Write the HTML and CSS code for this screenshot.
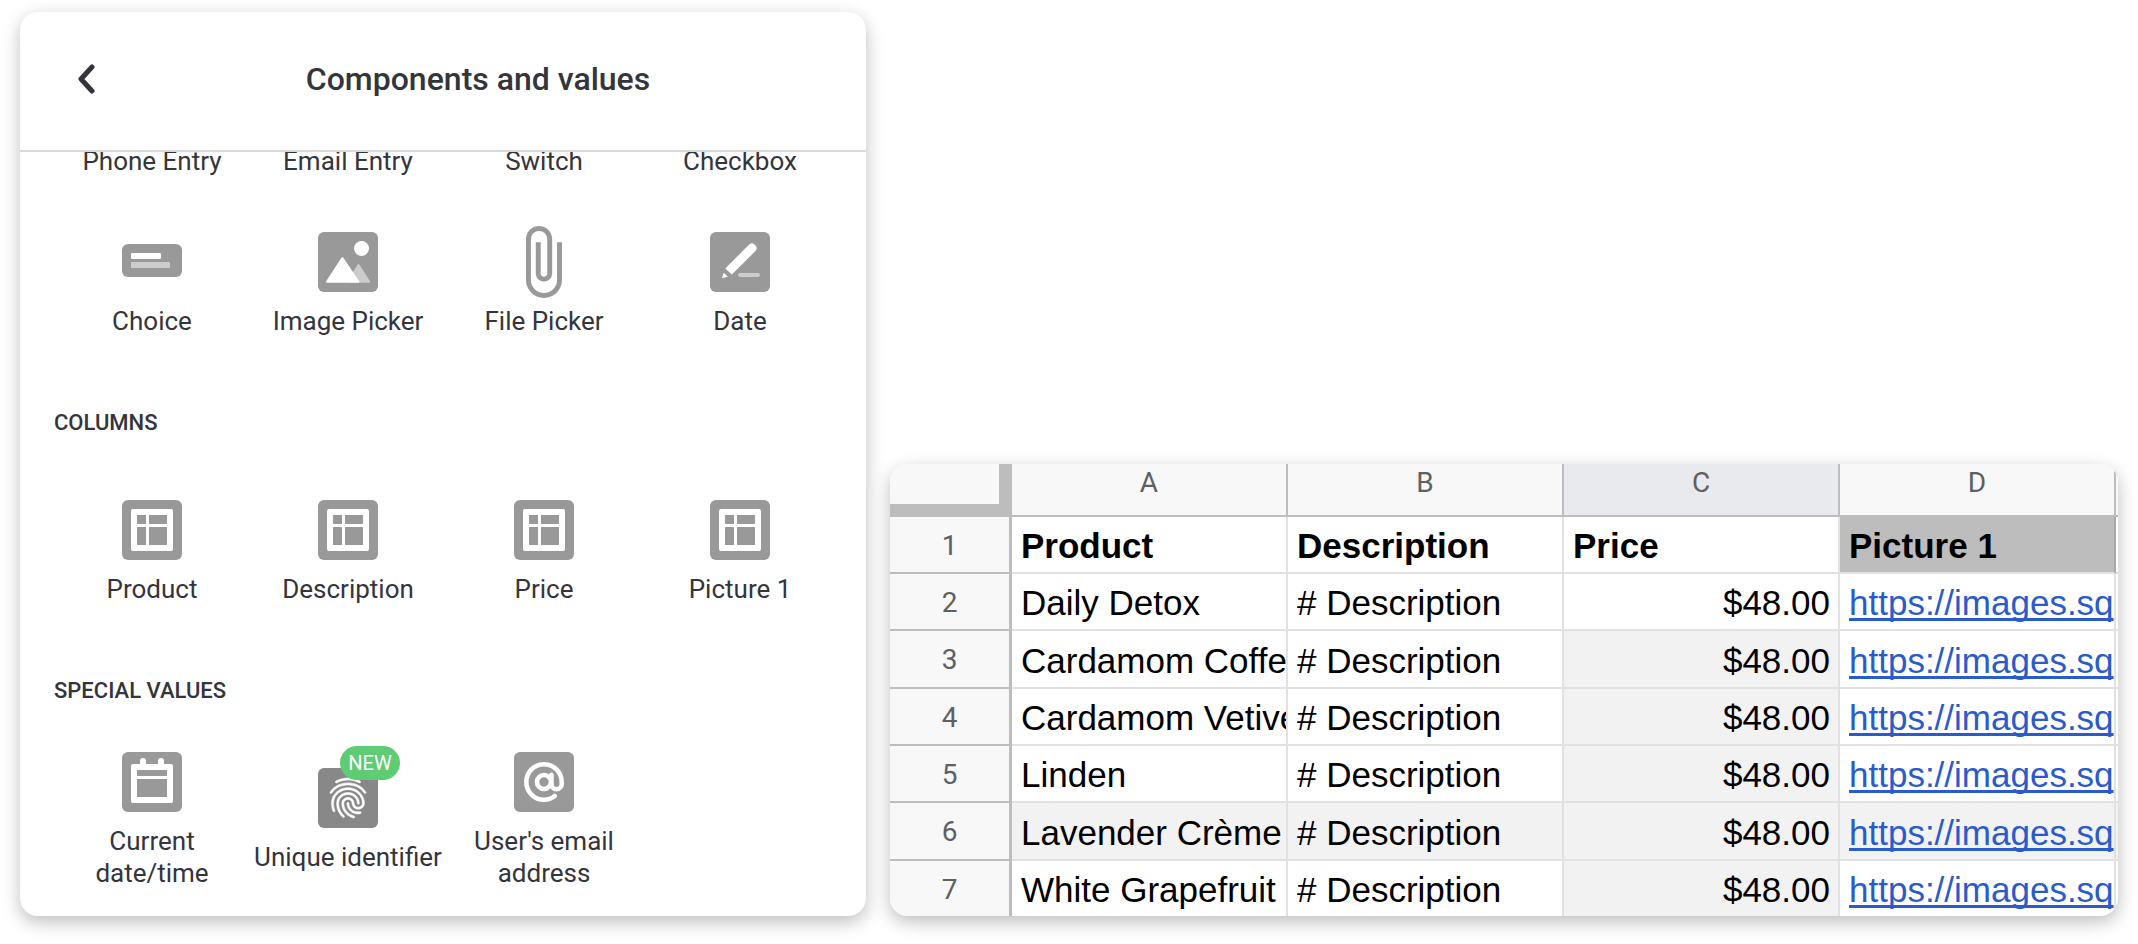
FILE: index.html
```html
<!DOCTYPE html>
<html lang="en">
<head>
    <meta charset="UTF-8">
    <meta name="viewport" content="width=device-width, initial-scale=1.0">
    <title>Components and values</title>
    <link rel="stylesheet" href="styles.css">
</head>
<body>
    <!-- shared column icon -->
    <svg class="sprite" aria-hidden="true">
        <symbol id="icon-column" viewBox="0 0 60 60">
            <rect width="60" height="60" rx="6" fill="#999"/>
            <rect x="9" y="9" width="42" height="42" rx="2" fill="#fff"/>
            <path d="M15 15h9v9h-9zM27 15h18v9h-18zM15 27h9v18h-9zM27 27h18v18h-18z" fill="#999"/>
        </symbol>
    </svg>

    <main class="page">
        <section class="card picker">
            <header class="picker-header">
                <button class="back" type="button" aria-label="Back">
                    <svg width="18" height="30" viewBox="0 0 18 30"><path d="M15 3L4 15l11 12" fill="none" stroke="#34343c" stroke-width="5" stroke-linecap="round" stroke-linejoin="round"/></svg>
                </button>
                <h1>Components and values</h1>
            </header>

            <div class="picker-body">
                <div class="scroll-content">
                    <div class="items">
                        <button class="item" type="button">Phone Entry</button>
                        <button class="item" type="button">Email Entry</button>
                        <button class="item" type="button">Switch</button>
                        <button class="item" type="button">Checkbox</button>
                    </div>
                    <div class="items fields">
                        <button class="item" type="button">
                            <svg class="icon" viewBox="0 0 60 60">
                                <rect y="12" width="60" height="33" rx="6" fill="#999"/>
                                <rect x="9" y="21" width="30" height="6" rx="1" fill="#fff"/>
                                <rect x="9" y="30" width="39" height="6" rx="1" fill="#ccc"/>
                            </svg>
                            Choice
                        </button>
                        <button class="item" type="button">
                            <svg class="icon" viewBox="0 0 60 60">
                                <rect width="60" height="60" rx="6" fill="#999"/>
                                <circle cx="43.5" cy="16.5" r="7.5" fill="#fff"/>
                                <path d="M40.5 33L51.2 49.7H30z" fill="#ccc" stroke="#ccc" stroke-width="2" stroke-linejoin="round"/>
                                <path d="M24.4 26L9 49.7h31.4z" fill="#fff" stroke="#fff" stroke-width="2" stroke-linejoin="round"/>
                            </svg>
                            Image Picker
                        </button>
                        <button class="item" type="button">
                            <svg class="icon" viewBox="0 0 60 60">
                                <path transform="translate(-10.9 -9.27) scale(3.27)" fill="#999" d="M16.5 6v11.5c0 2.21-1.79 4-4 4s-4-1.79-4-4V5a2.5 2.5 0 0 1 5 0v10.5c0 .55-.45 1-1 1s-1-.45-1-1V6H10v9.5a2.5 2.5 0 0 0 5 0V5c0-2.21-1.79-4-4-4S7 2.79 7 5v12.5c0 3.04 2.46 5.5 5.5 5.5s5.5-2.46 5.5-5.5V6h-1.5z"/>
                            </svg>
                            File Picker
                        </button>
                        <button class="item" type="button">
                            <svg class="icon" viewBox="0 0 60 60">
                                <rect width="60" height="60" rx="6" fill="#999"/>
                                <path d="M15.3 36.6L38.7 12.9a4.6 4.6 0 0 1 6.6 6.4L21.8 42.4zM13.7 40.8l4.2 3.9L12 46z" fill="#fff"/>
                                <rect x="28" y="41" width="22" height="4" rx="2" fill="#ccc"/>
                            </svg>
                            Date
                        </button>
                    </div>

                    <h2>COLUMNS</h2>
                    <div class="items columns">
                        <button class="item" type="button"><svg class="icon"><use href="#icon-column"/></svg>Product</button>
                        <button class="item" type="button"><svg class="icon"><use href="#icon-column"/></svg>Description</button>
                        <button class="item" type="button"><svg class="icon"><use href="#icon-column"/></svg>Price</button>
                        <button class="item" type="button"><svg class="icon"><use href="#icon-column"/></svg>Picture 1</button>
                    </div>

                    <h2>SPECIAL VALUES</h2>
                    <div class="items special">
                        <button class="item" type="button">
                            <svg class="icon" viewBox="0 0 60 60">
                                <rect width="60" height="60" rx="6" fill="#999"/>
                                <path d="M18 12V9a3 3 0 0 1 6 0v3h12V9a3 3 0 0 1 6 0v3h7a2 2 0 0 1 2 2v35a2 2 0 0 1-2 2H11a2 2 0 0 1-2-2V14a2 2 0 0 1 2-2z" fill="#fff"/>
                                <path d="M15 18h30v6H15zM15 27h30v18H15z" fill="#999"/>
                            </svg>
                            Current date/time
                        </button>
                        <button class="item has-badge" type="button">
                            <span class="icon-wrap">
                                <svg class="icon" viewBox="0 0 60 60">
                                    <rect width="60" height="60" rx="6" fill="#888"/>
                                    <path transform="translate(6 6) scale(2)" fill="#fff" stroke="#fff" stroke-width=".3" d="M17.81 4.47c-.08 0-.16-.02-.23-.06C15.66 3.42 14 3 12.01 3c-1.98 0-3.86.47-5.57 1.41-.24.13-.54.04-.68-.2-.13-.24-.04-.55.2-.68C7.82 2.52 9.86 2 12.01 2c2.13 0 3.99.47 6.03 1.52.25.13.34.43.21.67-.09.18-.26.28-.44.28zM3.5 9.72c-.1 0-.2-.03-.29-.09-.23-.16-.28-.47-.12-.7.99-1.4 2.25-2.5 3.75-3.27C9.98 4.04 14 4.03 17.15 5.65c1.5.77 2.76 1.86 3.75 3.25.16.22.11.54-.12.7-.23.16-.54.11-.7-.12-.9-1.26-2.04-2.25-3.39-2.94-2.87-1.47-6.54-1.47-9.4.01-1.36.7-2.5 1.7-3.4 2.96-.08.14-.23.21-.39.21zm6.25 12.07c-.13 0-.26-.05-.35-.15-.87-.87-1.34-1.43-2.01-2.64-.69-1.23-1.05-2.73-1.05-4.34 0-2.97 2.54-5.39 5.66-5.39s5.66 2.42 5.66 5.39c0 .28-.22.5-.5.5s-.5-.22-.5-.5c0-2.42-2.09-4.39-4.66-4.39-2.57 0-4.66 1.97-4.66 4.39 0 1.44.32 2.77.93 3.85.64 1.15 1.08 1.64 1.85 2.42.19.2.19.51 0 .71-.11.1-.24.15-.37.15zm7.17-1.85c-1.19 0-2.24-.3-3.1-.89-1.49-1.01-2.38-2.65-2.38-4.39 0-.28.22-.5.5-.5s.5.22.5.5c0 1.41.72 2.74 1.94 3.56.71.48 1.54.71 2.54.71.24 0 .64-.03 1.04-.1.27-.05.53.13.58.41.05.27-.13.53-.41.58-.57.11-1.07.12-1.21.12zM14.91 22c-.04 0-.09-.01-.13-.02-1.59-.44-2.63-1.03-3.72-2.1-1.4-1.39-2.17-3.24-2.17-5.22 0-1.62 1.38-2.94 3.08-2.94 1.7 0 3.08 1.32 3.08 2.94 0 1.07.93 1.94 2.08 1.94s2.08-.87 2.08-1.94c0-3.77-3.25-6.83-7.25-6.83-2.84 0-5.44 1.58-6.61 4.03-.39.81-.59 1.76-.59 2.8 0 .78.07 2.01.67 3.61.1.26-.03.55-.29.64-.26.1-.55-.04-.64-.29-.49-1.31-.73-2.61-.73-3.96 0-1.2.23-2.29.68-3.24 1.33-2.79 4.28-4.6 7.51-4.6 4.55 0 8.25 3.51 8.25 7.83 0 1.62-1.38 2.94-3.08 2.94s-3.08-1.32-3.08-2.94c0-1.07-.93-1.94-2.08-1.94s-2.08.87-2.08 1.94c0 1.71.66 3.31 1.87 4.51.95.94 1.86 1.46 3.27 1.85.27.07.42.35.35.61-.05.23-.26.38-.47.38z"/>
                                </svg>
                                <span class="badge">NEW</span>
                            </span>
                            Unique identifier
                        </button>
                        <button class="item" type="button">
                            <svg class="icon" viewBox="0 0 60 60">
                                <rect width="60" height="60" rx="6" fill="#999"/>
                                <g fill="none" stroke="#fff" stroke-width="4.6" stroke-linecap="round">
                                    <circle cx="30" cy="30" r="7"/>
                                    <path d="M37.4 22.8V32a5.1 5.1 0 0 0 10.3 0v-2A17.7 17.7 0 1 0 30 47.7c4 0 7.6-1.2 10.7-3.7"/>
                                </g>
                            </svg>
                            User's email address
                        </button>
                    </div>
                </div>
            </div>
        </section>

        <section class="card sheet">
            <table>
                <colgroup>
                    <col class="col-number">
                    <col>
                    <col>
                    <col>
                    <col>
                    <col class="col-edge">
                </colgroup>
                <thead>
                    <tr>
                        <td class="corner"></td>
                        <th scope="col">A</th>
                        <th scope="col">B</th>
                        <th scope="col" class="active">C</th>
                        <th scope="col">D</th>
                        <td class="edge"></td>
                    </tr>
                </thead>
                <tbody>
                    <tr class="titles">
                        <th scope="row">1</th>
                        <td>Product</td>
                        <td>Description</td>
                        <td>Price</td>
                        <td class="selected">Picture 1</td>
                        <td class="edge"></td>
                    </tr>
                    <tr>
                        <th scope="row">2</th>
                        <td>Daily Detox</td>
                        <td># Description</td>
                        <td class="price">$48.00</td>
                        <td><a href="#">https://images.sq</a></td>
                        <td class="edge"></td>
                    </tr>
                    <tr>
                        <th scope="row">3</th>
                        <td>Cardamom Coffee</td>
                        <td># Description</td>
                        <td class="price shaded">$48.00</td>
                        <td><a href="#">https://images.sq</a></td>
                        <td class="edge"></td>
                    </tr>
                    <tr>
                        <th scope="row">4</th>
                        <td>Cardamom Vetiver</td>
                        <td># Description</td>
                        <td class="price shaded">$48.00</td>
                        <td><a href="#">https://images.sq</a></td>
                        <td class="edge"></td>
                    </tr>
                    <tr>
                        <th scope="row">5</th>
                        <td>Linden</td>
                        <td># Description</td>
                        <td class="price shaded">$48.00</td>
                        <td><a href="#">https://images.sq</a></td>
                        <td class="edge"></td>
                    </tr>
                    <tr class="shaded-row">
                        <th scope="row">6</th>
                        <td>Lavender Crème</td>
                        <td># Description</td>
                        <td class="price">$48.00</td>
                        <td><a href="#">https://images.sq</a></td>
                        <td class="edge"></td>
                    </tr>
                    <tr>
                        <th scope="row">7</th>
                        <td>White Grapefruit</td>
                        <td># Description</td>
                        <td class="price shaded">$48.00</td>
                        <td><a href="#">https://images.sq</a></td>
                        <td class="edge"></td>
                    </tr>
                </tbody>
            </table>
        </section>
    </main>
</body>
</html>
```
FILE: styles.css
```css
* {
    box-sizing: border-box;
}

body {
    margin: 0;
    background-color: #fff;
    font-family: Roboto, sans-serif;
    color: #34343c;
}

.sprite {
    display: none;
}

.page {
    display: grid;
    grid-template-columns: 846fr 1228fr;
    gap: 24px;
    align-items: end;
    padding: 12px 20px 28px;
}

.card {
    background-color: #fff;
    border-radius: 18px;
    box-shadow: 0 6px 18px rgba(0, 0, 0, 0.26);
    overflow: hidden;
    min-width: 0;
}

/* Component picker */

.picker-header {
    display: flex;
    align-items: center;
    padding: 48px 34px 52px 54px;
    border-bottom: 2px solid #d9d9d9;
}

.back {
    display: flex;
    width: 50px;
    padding: 0 3px;
    border: none;
    background: none;
    cursor: pointer;
}

h1 {
    flex: 1;
    margin: 0;
    font-size: 32px;
    line-height: 38px;
    font-weight: 500;
    text-align: center;
}

.picker-body {
    overflow: hidden;
}

/* list is scrolled, so its first row is cut by the header */
.scroll-content {
    margin-top: -7px;
    padding: 0 28px 27px 34px;
}

.items {
    display: grid;
    grid-template-columns: repeat(4, 1fr);
    align-items: start;
}

.fields {
    margin-top: 55px;
}

.columns {
    margin-top: 64px;
}

.special {
    margin-top: 48px;
}

.item {
    display: flex;
    flex-direction: column;
    align-items: center;
    gap: 13px;
    padding: 0 2px;
    border: none;
    background: none;
    font: inherit;
    font-size: 26px;
    line-height: 32px;
    color: inherit;
    cursor: pointer;
}

.special .item:not(.has-badge) {
    padding: 0 24px;
}

.has-badge {
    padding-top: 16px;
}

.icon {
    display: block;
    width: 60px;
    height: 60px;
    overflow: visible;
}

.icon-wrap {
    position: relative;
}

.badge {
    position: absolute;
    top: -22px;
    left: 22px;
    width: 60px;
    border-radius: 17px;
    background-color: #5ecb75;
    color: #fff;
    font-size: 20px;
    line-height: 34px;
    text-align: center;
}

h2 {
    margin: 73px 0 0;
    font-size: 22px;
    line-height: 26px;
    font-weight: 500;
}

/* Spreadsheet */

table {
    width: 100%;
    table-layout: fixed;
    border-collapse: separate;
    border-spacing: 0;
}

.col-number {
    width: 122px;
}

.col-edge {
    width: 2px;
}

th {
    padding: 0;
    background-color: #f8f8f8;
    border-right: 2px solid #bdbdbd;
    border-bottom: 2px solid #bdbdbd;
    color: #5f6063;
    font-size: 28px;
    line-height: 32px;
    font-weight: 400;
}

thead th {
    height: 53px;
    padding-bottom: 14px;
}

tbody th {
    padding-top: 2px;
    border-right-width: 3px;
}

td {
    height: 57px;
    padding: 3px 8px 0 9px;
    border-right: 2px solid #e1e1e4;
    border-bottom: 2px solid #e1e1e4;
    color: #000;
    font-family: "Liberation Sans", Arial, sans-serif;
    font-size: 35px;
    line-height: 42px;
    white-space: nowrap;
    overflow: hidden;
}

tr:nth-child(3n) td {
    height: 58px;
}

tbody tr:last-child td {
    height: 55px;
}

tbody tr:last-child > * {
    border-bottom: none;
}

thead .corner {
    height: 53px;
    background-color: #f8f8f8;
    border-right: 13px solid #bdbdbd;
    border-bottom: 13px solid #bdbdbd;
}

.active {
    background-color: #e8eaed;
}

.titles td {
    font-weight: 700;
}

.titles .selected {
    background-color: #bdbdbd;
    border-right-color: #a8a8a8;
}

.price {
    text-align: right;
}

.shaded,
.shaded-row td {
    background-color: #f2f2f2;
}

td.edge {
    height: auto;
    padding: 0;
    border-right: none;
}

thead .edge {
    background-color: #f8f8f8;
    border-bottom-color: #bdbdbd;
}

td a {
    color: #2a5bcc;
    text-decoration-thickness: 3px;
    text-underline-offset: 3px;
    text-decoration-skip-ink: none;
}
```
